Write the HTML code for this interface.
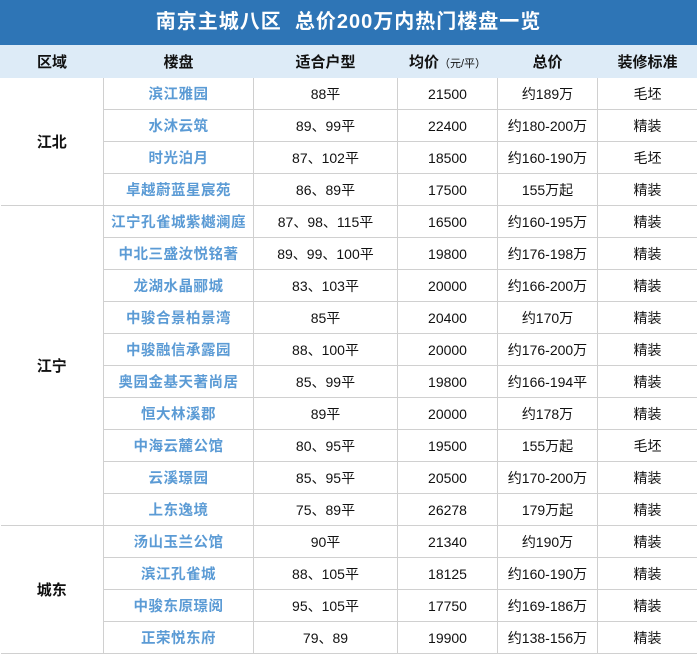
<!DOCTYPE html><html><head><meta charset="utf-8"><style>
body{margin:0;width:697px;height:655px;overflow:hidden;background:#fff;font-family:"Liberation Sans","Noto Sans CJK SC",sans-serif}
.t{height:45px;background:#2e75b6;color:#fff;font-size:20px;font-weight:bold;text-align:center;line-height:45px;letter-spacing:1px}
table{border-collapse:collapse;width:697px;table-layout:fixed}
td{height:31px;border:1px solid #d0d0d0;text-align:center;font-size:14px;color:#111;padding:0}
tr.h td{height:32px;background:#ddebf7;font-weight:bold;font-size:15px;border-color:#ddebf7;border-top:0}
td.n{color:#5b9bd5;font-weight:bold;font-size:14.5px;letter-spacing:0.5px}
td.r{font-weight:bold;font-size:15px}
small{font-weight:normal;font-size:11px}
</style></head><body>
<div class="t">南京主城八区&nbsp; 总价200万内热门楼盘一览</div>
<table>
<col style="width:103px"><col style="width:150px"><col style="width:144px"><col style="width:100px"><col style="width:100px"><col style="width:100px">
<tr class="h"><td>区域</td><td>楼盘</td><td>适合户型</td><td>均价<small>（元/平）</small></td><td>总价</td><td>装修标准</td></tr>
<tr><td class="r" rowspan="4" style="border-left:0">江北</td><td class="n">滨江雅园</td><td>88平</td><td>21500</td><td>约189万</td><td>毛坯</td></tr>
<tr><td class="n">水沐云筑</td><td>89、99平</td><td>22400</td><td>约180-200万</td><td>精装</td></tr>
<tr><td class="n">时光泊月</td><td>87、102平</td><td>18500</td><td>约160-190万</td><td>毛坯</td></tr>
<tr><td class="n">卓越蔚蓝星宸苑</td><td>86、89平</td><td>17500</td><td>155万起</td><td>精装</td></tr>
<tr><td class="r" rowspan="10" style="border-left:0">江宁</td><td class="n">江宁孔雀城紫樾澜庭</td><td>87、98、115平</td><td>16500</td><td>约160-195万</td><td>精装</td></tr>
<tr><td class="n">中北三盛汝悦铭著</td><td>89、99、100平</td><td>19800</td><td>约176-198万</td><td>精装</td></tr>
<tr><td class="n">龙湖水晶郦城</td><td>83、103平</td><td>20000</td><td>约166-200万</td><td>精装</td></tr>
<tr><td class="n">中骏合景柏景湾</td><td>85平</td><td>20400</td><td>约170万</td><td>精装</td></tr>
<tr><td class="n">中骏融信承露园</td><td>88、100平</td><td>20000</td><td>约176-200万</td><td>精装</td></tr>
<tr><td class="n">奥园金基天著尚居</td><td>85、99平</td><td>19800</td><td>约166-194平</td><td>精装</td></tr>
<tr><td class="n">恒大林溪郡</td><td>89平</td><td>20000</td><td>约178万</td><td>精装</td></tr>
<tr><td class="n">中海云麓公馆</td><td>80、95平</td><td>19500</td><td>155万起</td><td>毛坯</td></tr>
<tr><td class="n">云溪璟园</td><td>85、95平</td><td>20500</td><td>约170-200万</td><td>精装</td></tr>
<tr><td class="n">上东逸境</td><td>75、89平</td><td>26278</td><td>179万起</td><td>精装</td></tr>
<tr><td class="r" rowspan="4" style="border-left:0">城东</td><td class="n">汤山玉兰公馆</td><td>90平</td><td>21340</td><td>约190万</td><td>精装</td></tr>
<tr><td class="n">滨江孔雀城</td><td>88、105平</td><td>18125</td><td>约160-190万</td><td>精装</td></tr>
<tr><td class="n">中骏东原璟阅</td><td>95、105平</td><td>17750</td><td>约169-186万</td><td>精装</td></tr>
<tr><td class="n">正荣悦东府</td><td>79、89</td><td>19900</td><td>约138-156万</td><td>精装</td></tr>
</table></body></html>
